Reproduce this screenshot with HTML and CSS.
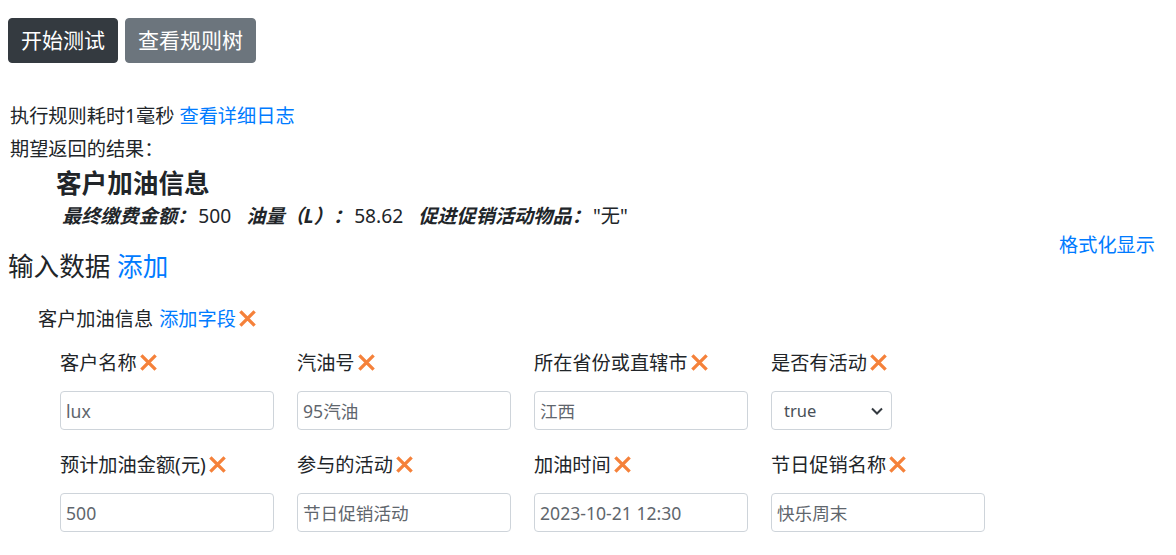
FILE: index.html
```html
<!DOCTYPE html>
<html lang="zh-CN">
<head>
<meta charset="utf-8">
<title>规则测试</title>
<link rel="stylesheet" href="styles.css">
</head>
<body>
<div class="toolbar">
  <button class="btn btn-dark">开始测试</button>
  <button class="btn btn-gray">查看规则树</button>
</div>

<div class="info">
  <div class="line">执行规则耗时1毫秒 <a class="link" href="#">查看详细日志</a></div>
  <div class="line">期望返回的结果：</div>
</div>

<div class="result">
  <h4 class="result-title">客户加油信息</h4>
  <div class="result-row">
    <span class="item"><b>最终缴费金额：</b>500</span>
    <span class="item"><b>油量（L）：</b>58.62</span>
    <span class="item"><b>促进促销活动物品：</b>"无"</span>
  </div>
</div>

<div class="input-head">
  <h3 class="input-title">输入数据 <a class="link" href="#">添加</a></h3>
  <a class="link format" href="#">格式化显示</a>
</div>

<div class="group">
  <div class="group-title">客户加油信息 <a class="link" href="#">添加字段</a><svg class="x" viewBox="0 0 16 16"><path d="M2 2L14 14M14 2L2 14"/></svg></div>
  <div class="fields">
    <div class="field">
      <div class="label">客户名称<svg class="x" viewBox="0 0 16 16"><path d="M2 2L14 14M14 2L2 14"/></svg></div>
      <input class="control" value="lux">
    </div>
    <div class="field">
      <div class="label">汽油号<svg class="x" viewBox="0 0 16 16"><path d="M2 2L14 14M14 2L2 14"/></svg></div>
      <input class="control" value="95汽油">
    </div>
    <div class="field">
      <div class="label">所在省份或直辖市<svg class="x" viewBox="0 0 16 16"><path d="M2 2L14 14M14 2L2 14"/></svg></div>
      <input class="control" value="江西">
    </div>
    <div class="field">
      <div class="label">是否有活动<svg class="x" viewBox="0 0 16 16"><path d="M2 2L14 14M14 2L2 14"/></svg></div>
      <div class="select">
        <span>true</span>
        <svg class="chev" viewBox="0 0 16 16"><path d="M3 5.5L8 10.5L13 5.5"/></svg>
      </div>
    </div>
    <div class="field">
      <div class="label">预计加油金额(元)<svg class="x" viewBox="0 0 16 16"><path d="M2 2L14 14M14 2L2 14"/></svg></div>
      <input class="control" value="500">
    </div>
    <div class="field">
      <div class="label">参与的活动<svg class="x" viewBox="0 0 16 16"><path d="M2 2L14 14M14 2L2 14"/></svg></div>
      <input class="control" value="节日促销活动">
    </div>
    <div class="field">
      <div class="label">加油时间<svg class="x" viewBox="0 0 16 16"><path d="M2 2L14 14M14 2L2 14"/></svg></div>
      <input class="control" value="2023-10-21 12:30">
    </div>
    <div class="field">
      <div class="label">节日促销名称<svg class="x" viewBox="0 0 16 16"><path d="M2 2L14 14M14 2L2 14"/></svg></div>
      <input class="control" value="快乐周末">
    </div>
  </div>
</div>
</body>
</html>
```

FILE: styles.css
```css
* { box-sizing: border-box; }
html, body { margin: 0; }
body {
  padding: 0 21px 0 8px;
  font-family: "Noto Sans", "Noto Sans CJK SC", sans-serif;
  font-size: 19.2px;
  color: #212529;
  background: #fff;
  overflow: hidden;
}
a.link { color: #007bff; text-decoration: none; }

.toolbar { display: flex; gap: 7px; padding-top: 18px; }
.btn {
  font-family: inherit;
  font-size: 21px;
  line-height: 31px;
  padding: 6px 12px;
  border: 1px solid transparent;
  border-radius: 4px;
  color: #fff;
  cursor: pointer;
}
.btn-dark { background: #343a40; border-color: #343a40; }
.btn-gray { background: #6c757d; border-color: #6c757d; }

.info { margin-top: 36px; padding-left: 2px; }
.line { line-height: 33px; }

.result { margin-top: 3px; }
.result-title {
  margin: 0;
  padding-left: 48px;
  font-size: 25.6px;
  line-height: 31px;
  font-weight: 700;
}
.result-row { margin-top: 3px; padding-left: 54px; line-height: 27px; font-size: 19.2px; display: flex; gap: 15px; }
.result-row b { font-style: italic; font-weight: 700; margin-right: 2px; }

.input-head { display: flex; justify-content: space-between; align-items: flex-start; margin-top: 2px; }
.input-title { margin: 20px 0 0; font-size: 25.6px; line-height: 31px; font-weight: 400; }
.format { line-height: 28px; }

.group { padding-left: 30px; margin-top: 22px; }
.group-title { line-height: 29px; display: flex; align-items: center; }
.group-title .link { margin-left: 6px; }

.x { width: 19px; height: 19px; margin-left: 2px; fill: none; stroke: #f5813a; stroke-width: 2.8; flex: none; }

.fields {
  display: grid;
  grid-template-columns: repeat(4, 214px);
  column-gap: 23px;
  row-gap: 20px;
  padding-left: 22px;
  margin-top: 15px;
}
.field { display: flex; flex-direction: column; gap: 14px; align-items: flex-start; }
.label { line-height: 29px; display: flex; align-items: center; }
.control {
  width: 214px;
  height: 39px;
  padding: 0 5px;
  border: 1px solid #ced4da;
  border-radius: 4px;
  font-family: "Noto Sans", "Noto Sans CJK SC", sans-serif;
  font-size: 17.6px;
  color: #5f666d;
  background: #fff;
}
.select {
  width: 121px;
  height: 39px;
  border: 1px solid #ced4da;
  border-radius: 4px;
  display: flex;
  align-items: center;
  justify-content: space-between;
  padding: 0 6px 0 12px;
  font-size: 16.5px;
  color: #495057;
}
.chev { width: 16px; height: 16px; fill: none; stroke: #343a40; stroke-width: 2; }
```
